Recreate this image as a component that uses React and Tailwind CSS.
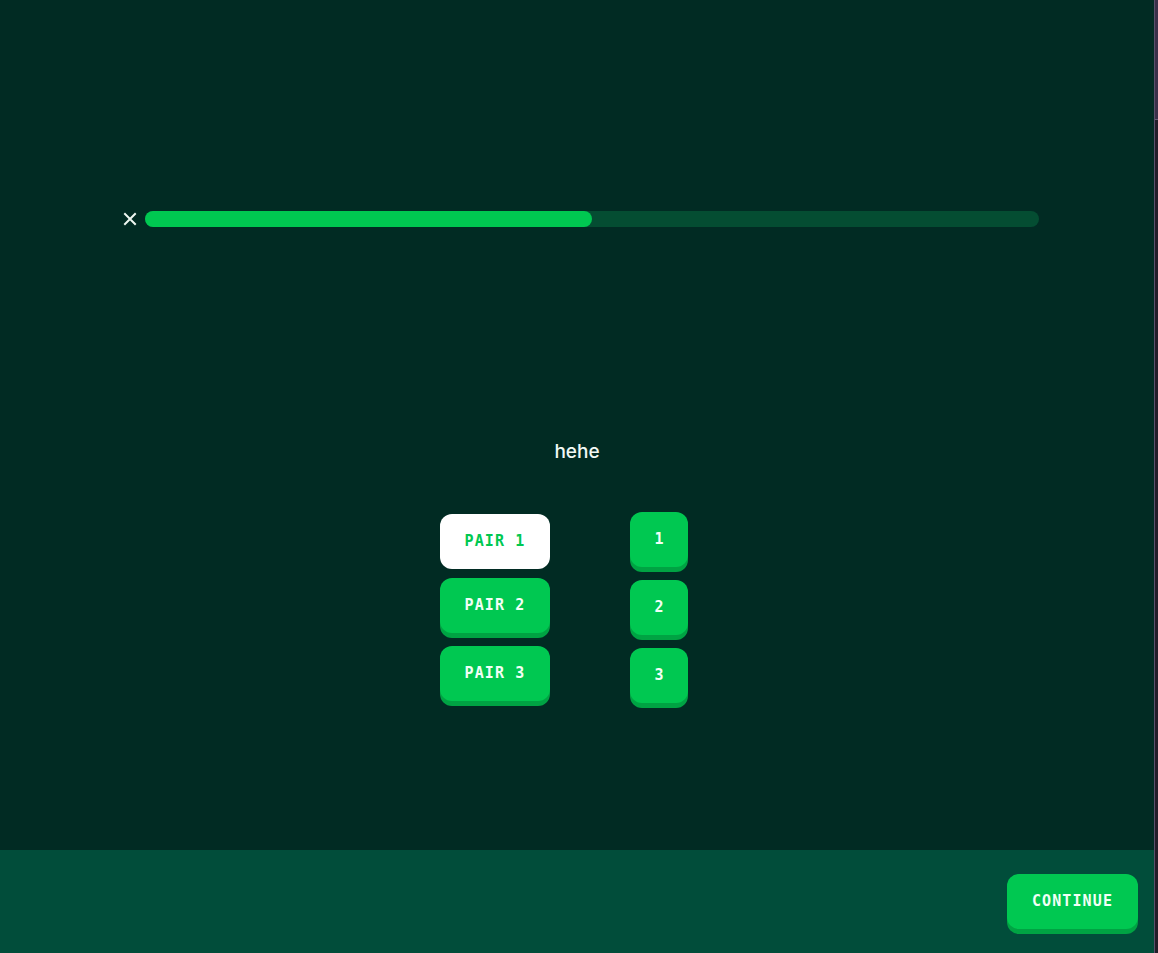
import React, { useState } from 'react';

const pairs = ['PAIR 1', 'PAIR 2', 'PAIR 3'];
const numbers = ['1', '2', '3'];

const monoText = "font-['DejaVu_Sans_Mono',monospace] text-[15px] font-bold";

function App() {
  const [selected, setSelected] = useState(0);

  return (
    <div className="flex h-[953px] w-[1158px] overflow-hidden bg-[#012b23]">
      <div className="flex w-[1154px] flex-col">
        {/* Lesson area */}
        <main className="flex h-[850px] flex-col">
          {/* Progress */}
          <div className="ml-[122px] mt-[211px] flex h-4 items-center gap-[8px]">
            <button className="flex h-4 w-[15px] items-center justify-center text-[#eef7f1]">
              <svg width="14" height="14" viewBox="0 0 14 14" fill="none">
                <path d="M2 2L12 12M12 2L2 12" stroke="currentColor" strokeWidth="2" strokeLinecap="square" />
              </svg>
            </button>
            <div className="h-4 w-[894px] rounded-full bg-[#044d32]">
              <div className="h-4 rounded-full bg-[#00c851]" style={{ width: '50%' }} />
            </div>
          </div>

          <h2 className="mt-[211px] text-center font-['Inter',sans-serif] text-[19px] font-medium leading-7 text-[#f1f8f4]">
            hehe
          </h2>

          {/* Matching columns */}
          <div className="mt-[44px] flex justify-center">
            <div className="flex w-[164px] flex-col items-center gap-[13px]">
              {pairs.map((p, i) => (
                <button
                  key={p}
                  onClick={() => setSelected(i)}
                  className={`h-[55px] w-[110px] rounded-xl tracking-[1.1px] ${monoText} ${
                    selected === i
                      ? 'mt-[4px] mb-[-4px] bg-white text-[#00c851]'
                      : 'bg-[#00c851] text-[#f2fff6] shadow-[0_5px_0_#00a343]'
                  }`}
                >
                  {p}
                </button>
              ))}
            </div>
            <div className="mt-[2px] flex w-[164px] flex-col items-center gap-[13px]">
              {numbers.map((n) => (
                <div
                  key={n}
                  className={`flex h-[55px] w-[58px] items-center justify-center rounded-xl bg-[#00c851] text-[#f2fff6] shadow-[0_5px_0_#00a343] ${monoText}`}
                >
                  {n}
                </div>
              ))}
            </div>
          </div>
        </main>

        {/* Footer */}
        <footer className="flex h-[103px] items-start justify-end bg-[#014d3a] pr-4 pt-[24px]">
          <button className={`h-[55px] w-[131px] rounded-xl bg-[#00c851] tracking-[1.1px] text-[#f2fff6] shadow-[0_5px_0_#00a343] ${monoText}`}>
            CONTINUE
          </button>
        </footer>
      </div>

      {/* Scrollbar strip */}
      <div className="flex w-[4px] flex-col border-l border-[#5c4f6b]">
        <div className="h-[120px] border-b border-[#6a5d78] bg-[#3b3049]" />
        <div className="flex-1 bg-[#231d29]" />
      </div>
    </div>
  );
}

export default App;
